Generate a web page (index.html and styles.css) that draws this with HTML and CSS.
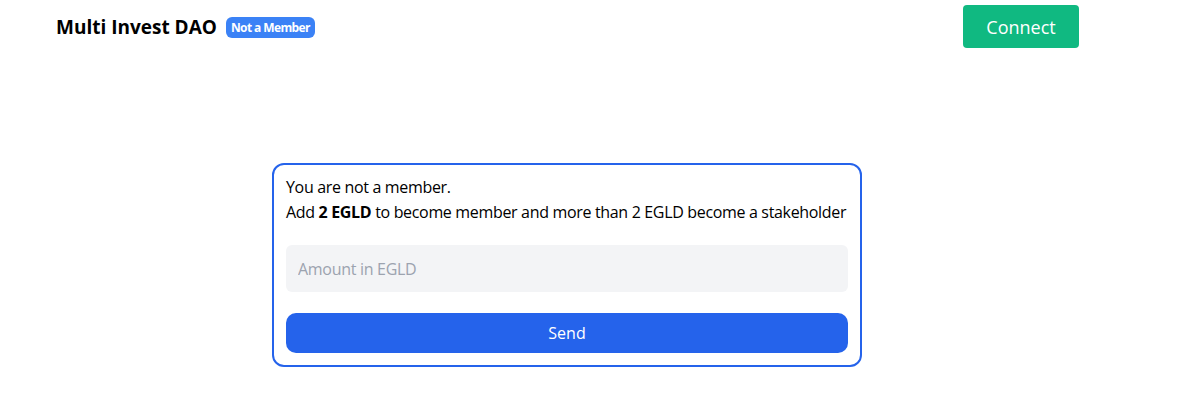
FILE: index.html
```html
<!DOCTYPE html>
<html>
<head>
<meta charset="utf-8">
<link rel="stylesheet" href="styles.css">
</head>
<body>
<div class="page">
  <header class="header">
    <div class="brand">
      <span class="title">Multi Invest DAO</span>
      <span class="badge">Not a Member</span>
    </div>
    <button class="connect">Connect</button>
  </header>
  <main class="main">
    <div class="card">
      <p class="line">You are not a member.</p>
      <p class="line">Add <b>2 EGLD</b> to become member and more than 2 EGLD become a stakeholder</p>
      <input class="amount" type="text" placeholder="Amount in EGLD">
      <button class="send">Send</button>
    </div>
  </main>
</div>
</body>
</html>
```

FILE: styles.css
```css
* { box-sizing: border-box; }
html, body { margin: 0; padding: 0; background: #fff; }
body {
  font-family: "Open Sans", "Noto Sans", sans-serif;
  color: #000;
}
.page { width: 1134px; }
.header {
  display: flex;
  justify-content: space-between;
  align-items: flex-start;
  padding: 5px 55px 0 56px;
}
.brand {
  display: flex;
  align-items: center;
  gap: 9px;
  padding-top: 8px;
}
.title {
  font-size: 19px;
  font-weight: 700;
  line-height: 28px;
  letter-spacing: 0;
}
.badge {
  background: #3b82f6;
  color: #fff;
  font-size: 12px;
  font-weight: 700;
  line-height: 21px;
  padding: 0 5px;
  border-radius: 6px;
  letter-spacing: -0.6px;
}
.connect {
  width: 116px;
  height: 43px;
  border: 0;
  border-radius: 4px;
  background: #10b981;
  color: #fff;
  font-family: inherit;
  font-size: 18px;
  padding: 0;
}
.main {
  display: flex;
  justify-content: center;
  padding-top: 115px;
}
.card {
  width: 590px;
  border: 2px solid #2563eb;
  border-radius: 12px;
  padding: 10px 12px 12px 12px;
  display: flex;
  flex-direction: column;
}
.line {
  margin: 0;
  font-size: 16px;
  line-height: 25px;
  letter-spacing: -0.33px;
  white-space: nowrap;
}
.line b { font-weight: 700; }
.amount {
  margin-top: 20px;
  height: 47px;
  border: 0;
  border-radius: 6px;
  background: #f3f4f6;
  padding: 0 12px;
  font-family: inherit;
  font-size: 16px;
  letter-spacing: -0.3px;
  outline: none;
}
.amount::placeholder { color: #9ca3af; }
.send {
  margin-top: 21px;
  height: 40px;
  border: 0;
  border-radius: 10px;
  background: #2563eb;
  color: #fff;
  font-family: inherit;
  font-size: 16px;
}
```
